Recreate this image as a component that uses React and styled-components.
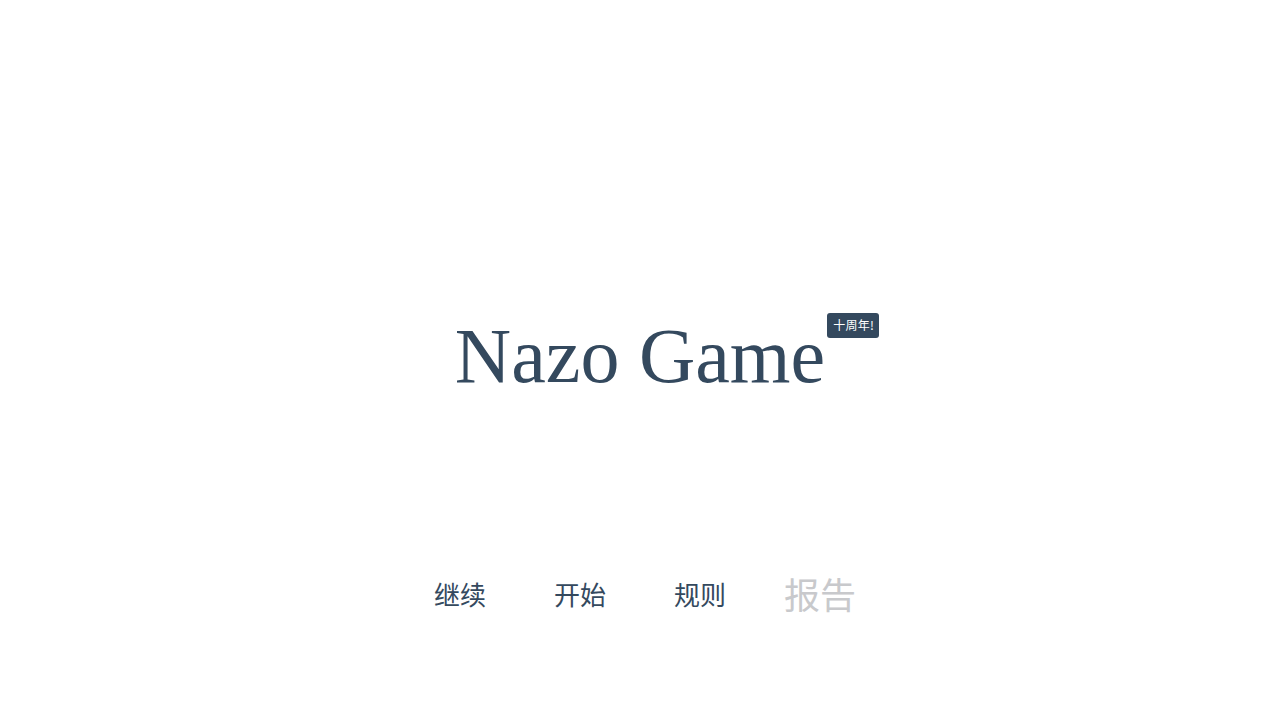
import React from "react";
import styled, { createGlobalStyle } from "styled-components";

const GlobalStyle = createGlobalStyle`
  html, body {
    margin: 0;
    padding: 0;
    background: #ffffff;
  }
`;

const Page = styled.div`
  width: 100%;
  height: 720px;
  display: flex;
  flex-direction: column;
  align-items: center;
  padding-top: 317px;
  box-sizing: border-box;
`;

const Title = styled.h1`
  position: relative;
  margin: 0 0 178px;
  font-family: "Liberation Serif", "Times New Roman", serif;
  font-weight: normal;
  font-size: 78px;
  line-height: 78px;
  color: #34495e;
`;

const Badge = styled.span`
  position: absolute;
  left: 100%;
  top: -4px;
  margin-left: 2px;
  padding: 0 5px 0 6px;
  height: 25px;
  line-height: 24px;
  border-radius: 3px;
  background: #34495e;
  color: #ffffff;
  font-family: "Noto Sans CJK SC", "Noto Sans", sans-serif;
  font-size: 12px;
  letter-spacing: 0.3px;
  white-space: nowrap;
`;

const Menu = styled.nav`
  display: flex;
  align-items: center;
  height: 40px;
`;

const MenuItem = styled.a`
  width: 120px;
  text-align: center;
  font-family: "Noto Sans CJK SC", "Noto Sans", sans-serif;
  font-size: ${(p) => (p.$disabled ? "36px" : "26px")};
  color: ${(p) => (p.$disabled ? "#c8c9cc" : "#34495e")};
  cursor: pointer;
  user-select: none;
`;

const items = [
  { label: "继续" },
  { label: "开始" },
  { label: "规则" },
  { label: "报告", disabled: true },
];

export default function App() {
  return (
    <>
      <GlobalStyle />
      <Page>
        <Title>
          Nazo Game
          <Badge>十周年!</Badge>
        </Title>
        <Menu>
          {items.map((it) => (
            <MenuItem key={it.label} $disabled={it.disabled}>
              {it.label}
            </MenuItem>
          ))}
        </Menu>
      </Page>
    </>
  );
}
